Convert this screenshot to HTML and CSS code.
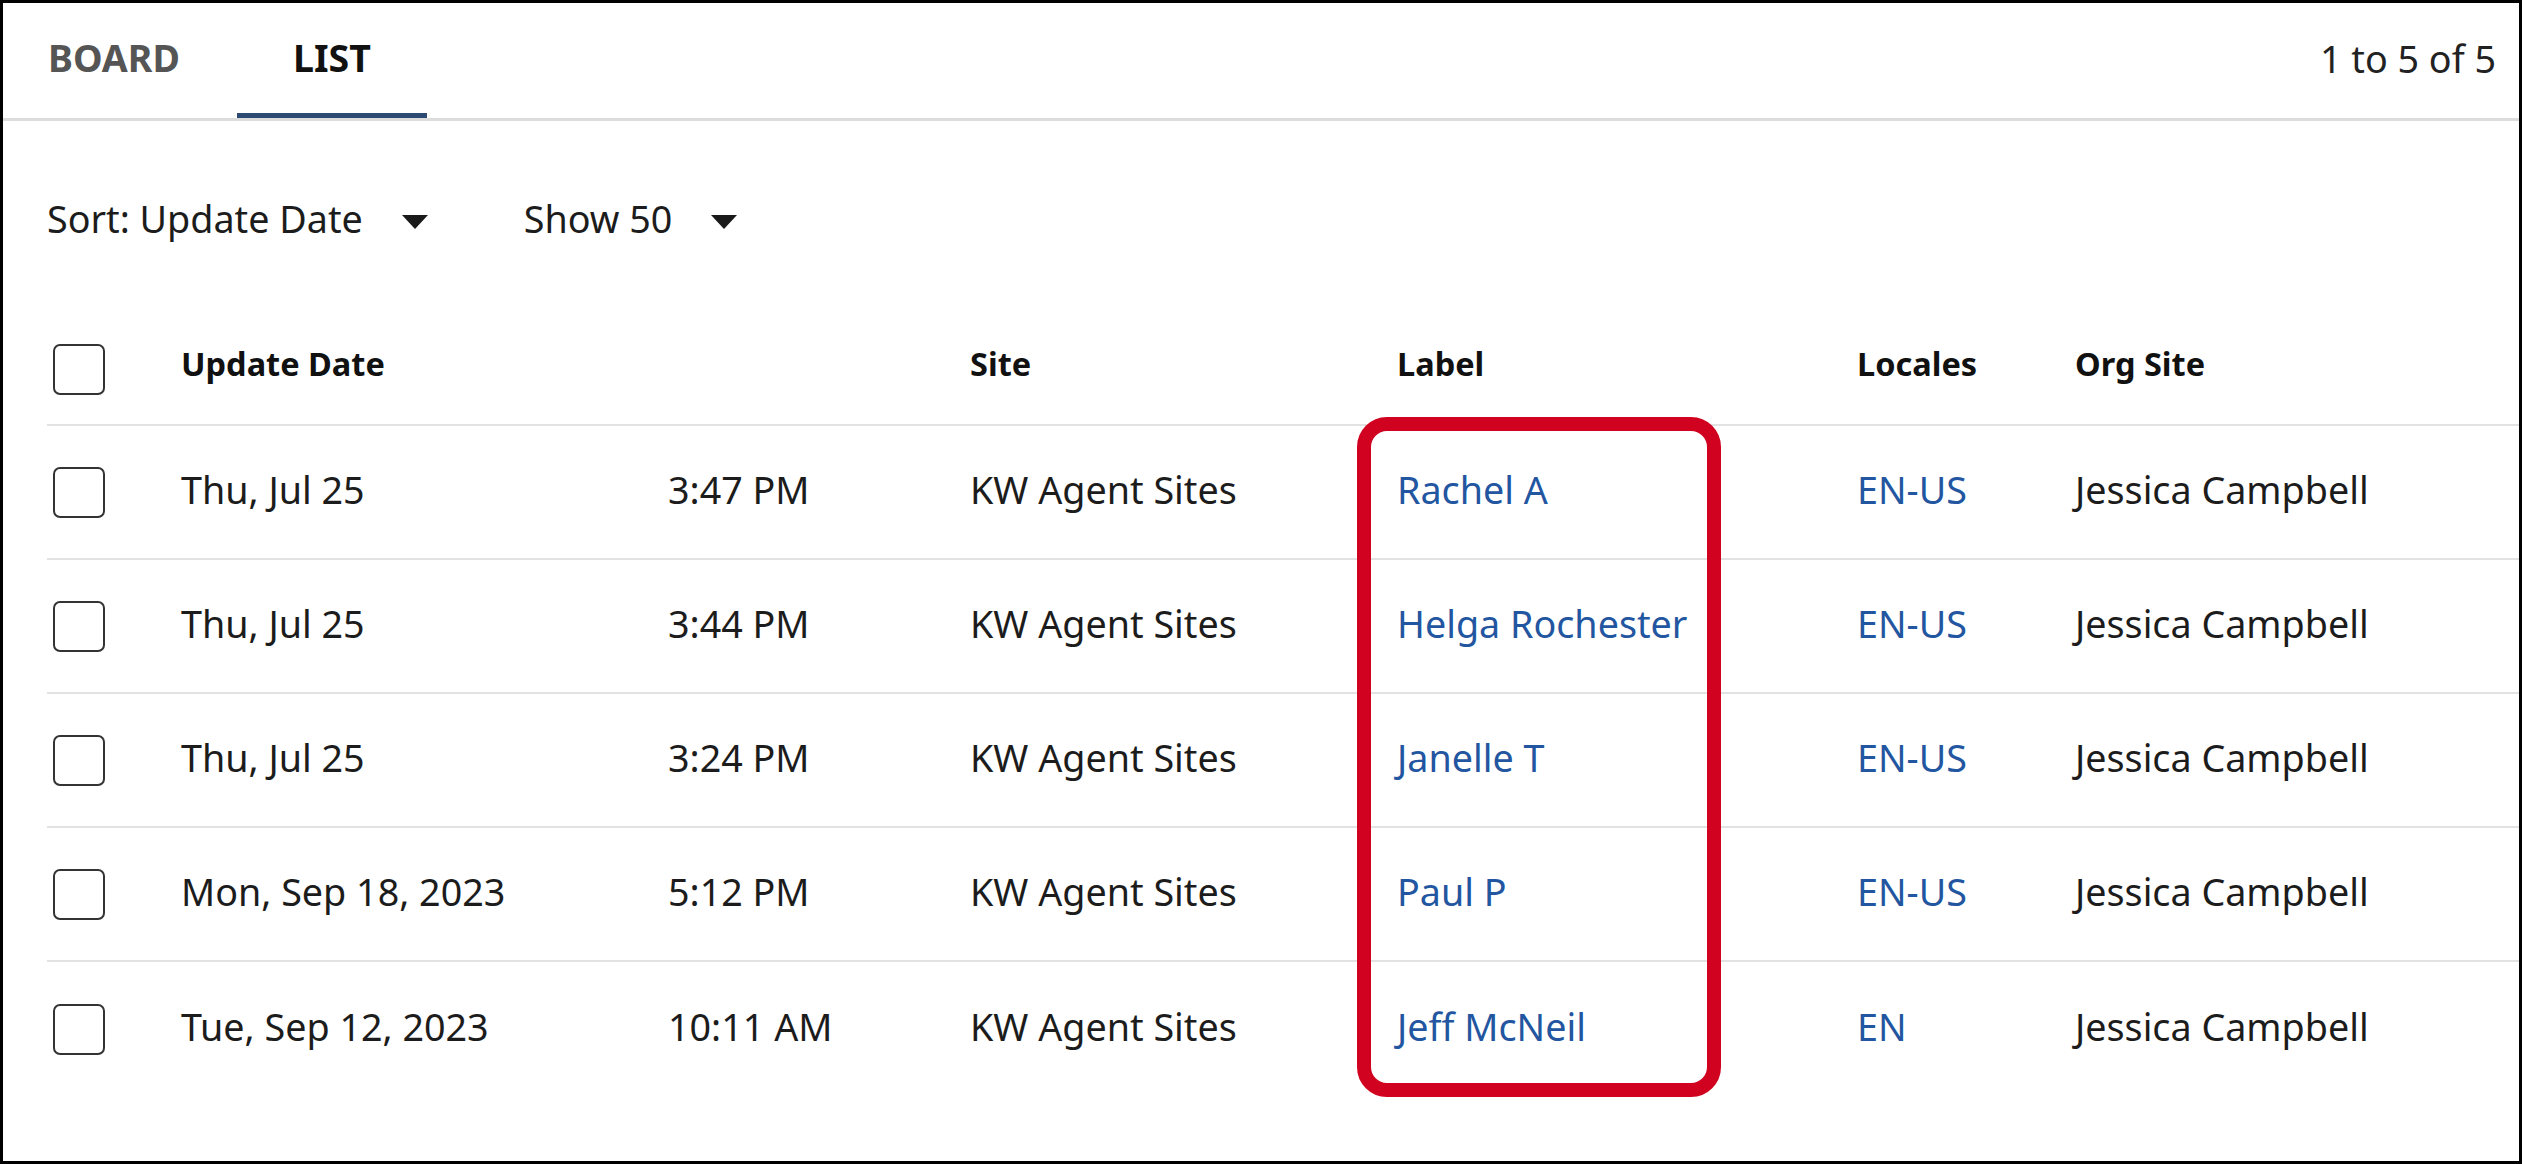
FILE: index.html
```html
<!DOCTYPE html>
<html lang="en">
<head>
<meta charset="utf-8">
<title>List</title>
<link rel="stylesheet" href="styles.css">
</head>
<body>
<div class="frame">
  <div class="tabs">
    <div class="tab tab-board">BOARD</div>
    <div class="tab tab-list active">LIST</div>
    <div class="count">1 to 5 of 5</div>
  </div>
  <div class="toolbar">
    <div class="dropdown dd-sort">Sort: Update Date<span class="caret"></span></div>
    <div class="dropdown dd-show">Show 50<span class="caret"></span></div>
  </div>
  <div class="table">
    <div class="row head">
      <div class="cell-box"><span class="check"></span></div>
      <div class="cell">Update Date</div>
      <div class="cell"></div>
      <div class="cell">Site</div>
      <div class="cell">Label</div>
      <div class="cell">Locales</div>
      <div class="cell">Org Site</div>
    </div>
    <div class="row">
      <div class="cell-box"><span class="check"></span></div>
      <div class="cell">Thu, Jul 25</div>
      <div class="cell">3:47 PM</div>
      <div class="cell">KW Agent Sites</div>
      <div class="cell link">Rachel A</div>
      <div class="cell link">EN-US</div>
      <div class="cell">Jessica Campbell</div>
    </div>
    <div class="row">
      <div class="cell-box"><span class="check"></span></div>
      <div class="cell">Thu, Jul 25</div>
      <div class="cell">3:44 PM</div>
      <div class="cell">KW Agent Sites</div>
      <div class="cell link">Helga Rochester</div>
      <div class="cell link">EN-US</div>
      <div class="cell">Jessica Campbell</div>
    </div>
    <div class="row">
      <div class="cell-box"><span class="check"></span></div>
      <div class="cell">Thu, Jul 25</div>
      <div class="cell">3:24 PM</div>
      <div class="cell">KW Agent Sites</div>
      <div class="cell link">Janelle T</div>
      <div class="cell link">EN-US</div>
      <div class="cell">Jessica Campbell</div>
    </div>
    <div class="row">
      <div class="cell-box"><span class="check"></span></div>
      <div class="cell">Mon, Sep 18, 2023</div>
      <div class="cell">5:12 PM</div>
      <div class="cell">KW Agent Sites</div>
      <div class="cell link">Paul P</div>
      <div class="cell link">EN-US</div>
      <div class="cell">Jessica Campbell</div>
    </div>
    <div class="row last">
      <div class="cell-box"><span class="check"></span></div>
      <div class="cell">Tue, Sep 12, 2023</div>
      <div class="cell">10:11 AM</div>
      <div class="cell">KW Agent Sites</div>
      <div class="cell link">Jeff McNeil</div>
      <div class="cell link">EN</div>
      <div class="cell">Jessica Campbell</div>
    </div>
    <div class="highlight"></div>
  </div>
</div>
</body>
</html>
```
FILE: styles.css
```css
html, body {
  margin: 0;
  padding: 0;
  background: #fff;
}

body {
  font-family: "Noto Sans", "Open Sans", sans-serif;
  color: #1c1c1c;
}

.frame {
  box-sizing: border-box;
  width: 2522px;
  height: 1164px;
  border: 3px solid #000;
  overflow: hidden;
}

.tabs {
  display: flex;
  align-items: stretch;
  height: 115px;
  border-bottom: 3px solid #dcdcdc;
}

.tab {
  box-sizing: border-box;
  display: flex;
  align-items: center;
  justify-content: center;
  padding-bottom: 1px;
  font-size: 37.5px;
  font-weight: 700;
  border-bottom: 5px solid transparent;
}

.tab-board {
  width: 234px;
  justify-content: flex-start;
  padding-left: 45px;
  color: #555;
}

.tab-list {
  width: 190px;
  color: #111;
}

.tab.active {
  border-bottom-color: #2d4a73;
}

.count {
  margin-left: auto;
  display: flex;
  align-items: center;
  padding-bottom: 5px;
  padding-right: 23px;
  font-size: 37.7px;
  color: #222;
}

.toolbar {
  box-sizing: border-box;
  display: flex;
  align-items: center;
  height: 200px;
  padding-left: 44px;
  padding-bottom: 6px;
  font-size: 37.7px;
  color: #1c1c1c;
}

.dropdown {
  display: flex;
  align-items: center;
}

.dd-sort {
  margin-right: 96px;
}

.caret {
  display: inline-block;
  width: 0;
  height: 0;
  margin-left: 39px;
  margin-top: 8px;
  border-left: 13.5px solid transparent;
  border-right: 13.5px solid transparent;
  border-top: 14px solid #1a1a1a;
}

.table {
  position: relative;
  padding-left: 44px;
}

.row {
  box-sizing: border-box;
  display: grid;
  grid-template-columns: 134px 487px 302px 427px 460px 218px 1fr;
  align-items: center;
  height: 134px;
  border-bottom: 2px solid #e2e2e2;
  font-size: 37.7px;
}

.row.head {
  height: 105px;
  font-size: 32.5px;
  font-weight: 700;
  color: #111;
}

.row.last {
  border-bottom: none;
}

.cell {
  white-space: nowrap;
  padding-bottom: 6px;
}

.row.head .cell {
  padding-bottom: 18px;
}

.link {
  color: #2356a0;
}

.check {
  display: block;
  box-sizing: border-box;
  width: 52px;
  height: 51px;
  margin-left: 6px;
  border: 2.5px solid #333;
  border-radius: 7px;
  background: #fff;
}

.row.head .check {
  margin-bottom: 6px;
}

.highlight {
  position: absolute;
  left: 1354px;
  top: 96px;
  width: 364px;
  height: 680px;
  box-sizing: border-box;
  border: 14px solid #d0021f;
  border-radius: 30px;
  pointer-events: none;
}
```
